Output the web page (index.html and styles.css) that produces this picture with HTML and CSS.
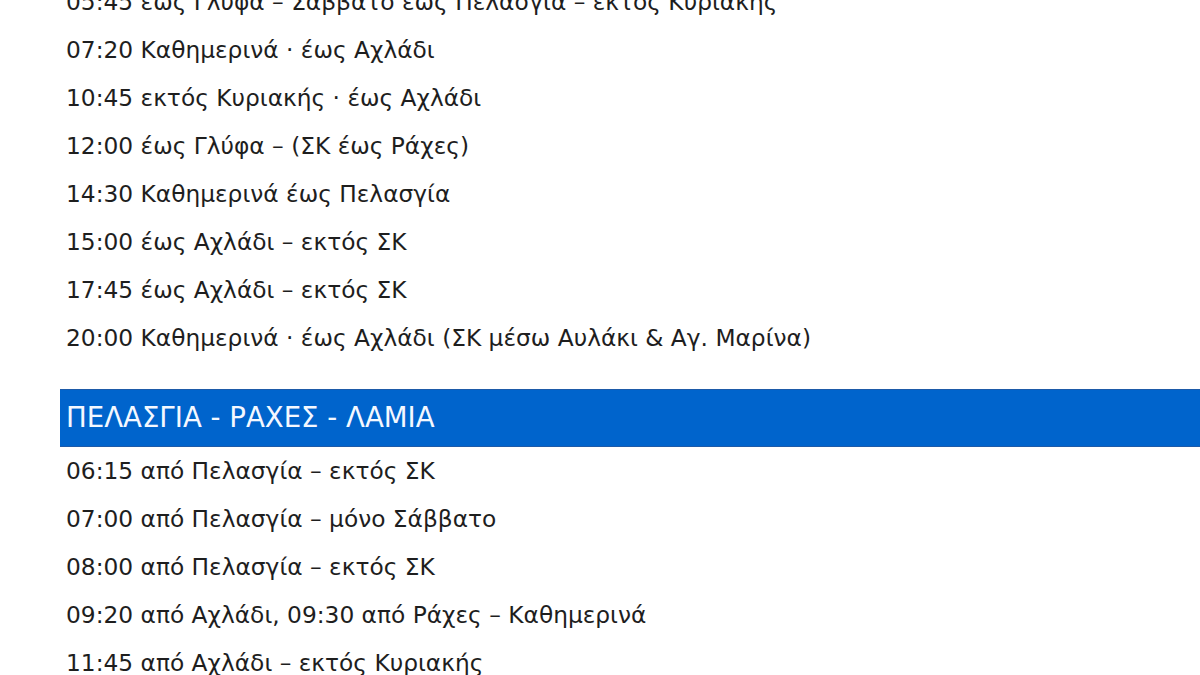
FILE: index.html
```html
<!DOCTYPE html>
<html lang="el">
<head>
<meta charset="utf-8">
<link rel="stylesheet" href="styles.css">
</head>
<body>
<main class="schedule">
  <ul class="trips first">
    <li>05:45 έως Γλύφα – Σάββατο έως Πελασγία – εκτός Κυριακής</li>
    <li>07:20 Καθημερινά · έως Αχλάδι</li>
    <li>10:45 εκτός Κυριακής · έως Αχλάδι</li>
    <li>12:00 έως Γλύφα – (ΣΚ έως Ράχες)</li>
    <li>14:30 Καθημερινά έως Πελασγία</li>
    <li>15:00 έως Αχλάδι – εκτός ΣΚ</li>
    <li>17:45 έως Αχλάδι – εκτός ΣΚ</li>
    <li>20:00 Καθημερινά · έως Αχλάδι (ΣΚ μέσω Αυλάκι &amp; Αγ. Μαρίνα)</li>
  </ul>
  <h2 class="route">ΠΕΛΑΣΓΙΑ - ΡΑΧΕΣ - ΛΑΜΙΑ</h2>
  <ul class="trips">
    <li>06:15 από Πελασγία – εκτός ΣΚ</li>
    <li>07:00 από Πελασγία – μόνο Σάββατο</li>
    <li>08:00 από Πελασγία – εκτός ΣΚ</li>
    <li>09:20 από Αχλάδι, 09:30 από Ράχες – Καθημερινά</li>
    <li>11:45 από Αχλάδι – εκτός Κυριακής</li>
  </ul>
</main>
</body>
</html>
```
FILE: styles.css
```css
html, body {
  margin: 0;
  padding: 0;
  background: #ffffff;
  overflow: hidden;
}
body {
  font-family: "DejaVu Sans", "Noto Sans", sans-serif;
  color: #1e1e1e;
}
.schedule {
  margin-left: 60px;
}
.trips {
  list-style: none;
  margin: 0;
  padding: 0;
}
.trips.first {
  margin-top: -22px;
}
.trips li {
  height: 48px;
  line-height: 48px;
  font-size: 23.3px;
  padding-left: 6px;
  white-space: nowrap;
}
.route {
  margin: 27px 0 0 0;
  height: 58px;
  line-height: 55px;
  box-sizing: border-box;
  background: #0064cc;
  border-top: 1px solid #1d5aa8;
  border-bottom: 1px solid #1d5aa8;
  color: #f4f8ff;
  font-weight: normal;
  font-size: 27.6px;
  padding-left: 6px;
}
```
